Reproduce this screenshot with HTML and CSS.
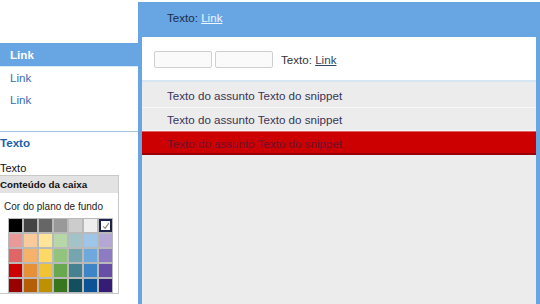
FILE: index.html
```html
<!DOCTYPE html>
<html lang="pt">
<head>
<meta charset="utf-8">
<title>UI</title>
<link rel="stylesheet" href="styles.css">
</head>
<body>
<div class="page">
  <aside class="sidebar">
    <nav class="nav">
      <div class="nav-item selected">Link</div>
      <a class="nav-item" href="#">Link</a>
      <a class="nav-item" href="#">Link</a>
    </nav>
    <section class="section">
      <div class="section-title">Texto</div>
      <div class="section-text">Texto</div>
      <div class="box">
        <div class="box-head">Conteúdo da caixa</div>
        <div class="box-body">
          <div class="box-label">Cor do plano de fundo</div>
          <div class="palette">
            <span class="sw" style="background:#000000"></span>
            <span class="sw" style="background:#444444"></span>
            <span class="sw" style="background:#666666"></span>
            <span class="sw" style="background:#999999"></span>
            <span class="sw" style="background:#cccccc"></span>
            <span class="sw" style="background:#eeeeee"></span>
            <span class="sw sel"><svg viewBox="0 0 10 10" width="8" height="8"><path d="M1.5 5.5 L4 8 L8.5 1.5" fill="none" stroke="#8a8a8a" stroke-width="1.5"/></svg></span>
            <span class="sw" style="background:#ea9999"></span>
            <span class="sw" style="background:#f9cb9c"></span>
            <span class="sw" style="background:#ffe599"></span>
            <span class="sw" style="background:#b6d7a8"></span>
            <span class="sw" style="background:#a2c4c9"></span>
            <span class="sw" style="background:#9fc5e8"></span>
            <span class="sw" style="background:#b4a7d6"></span>
            <span class="sw" style="background:#e06666"></span>
            <span class="sw" style="background:#f6b26b"></span>
            <span class="sw" style="background:#ffd966"></span>
            <span class="sw" style="background:#93c47d"></span>
            <span class="sw" style="background:#76a5af"></span>
            <span class="sw" style="background:#6fa8dc"></span>
            <span class="sw" style="background:#8e7cc3"></span>
            <span class="sw" style="background:#cc0000"></span>
            <span class="sw" style="background:#e69138"></span>
            <span class="sw" style="background:#f1c232"></span>
            <span class="sw" style="background:#6aa84f"></span>
            <span class="sw" style="background:#45818e"></span>
            <span class="sw" style="background:#3d85c6"></span>
            <span class="sw" style="background:#674ea7"></span>
            <span class="sw" style="background:#990000"></span>
            <span class="sw" style="background:#b45f06"></span>
            <span class="sw" style="background:#bf9000"></span>
            <span class="sw" style="background:#38761d"></span>
            <span class="sw" style="background:#134f5c"></span>
            <span class="sw" style="background:#0b5394"></span>
            <span class="sw" style="background:#351c75"></span>
          </div>
        </div>
      </div>
    </section>
  </aside>
  <main class="main">
    <header class="main-head">Texto: <a class="head-link" href="#">Link</a></header>
    <div class="toolbar">
      <input class="field" type="text">
      <input class="field" type="text">
      <span class="tool-text">Texto: <a class="tool-link" href="#">Link</a></span>
    </div>
    <div class="list">
      <div class="row">Texto do assunto Texto do snippet</div>
      <div class="row">Texto do assunto Texto do snippet</div>
      <div class="row row-red">Texto do assunto Texto do snippet</div>
    </div>
  </main>
</div>
</body>
</html>
```

FILE: styles.css
```css
* { box-sizing: border-box; }
html, body { margin: 0; padding: 0; }
body {
  width: 540px;
  height: 304px;
  overflow: hidden;
  background: #ffffff;
  font-family: "Liberation Sans", Arial, sans-serif;
  font-size: 11.6px;
  color: #222;
}
.page {
  display: flex;
  height: 304px;
}
.sidebar {
  width: 138px;
  flex: none;
  padding-top: 43px;
}
.nav {
  display: flex;
  flex-direction: column;
  border-bottom: 1px solid #a9c3de;
  padding-bottom: 20px;
}
.nav-item {
  display: block;
  height: 22px;
  line-height: 22px;
  padding-left: 10px;
  color: #3a6db4;
  text-decoration: none;
}
.nav-item.selected {
  height: 24px;
  line-height: 23px;
  background: #67a6e3;
  color: #ffffff;
  font-weight: bold;
  border-bottom: 1px solid #d8e8f6;
}
.section {
  padding-top: 3px;
}
.section-title {
  color: #1b5eae;
  font-weight: bold;
  line-height: 16px;
  margin-bottom: 10px;
}
.section-text {
  font-size: 11px;
  color: #111;
  line-height: 14px;
  margin-bottom: 0;
}
.box {
  width: 121px;
  margin-left: -2px;
  border: 1px solid #c9c9c9;
  background: #fff;
}
.box-head {
  background: #e3e3e3;
  font-weight: bold;
  font-size: 9.8px;
  color: #111;
  height: 17px;
  line-height: 17px;
  padding-left: 1px;
}
.box-body {
  padding: 8px 0 0 5px;
}
.box-label {
  font-size: 10px;
  color: #222;
  line-height: 12px;
  margin-bottom: 5px;
}
.palette {
  display: grid;
  grid-template-columns: repeat(7, 13px);
  grid-auto-rows: 13px;
  gap: 2px;
  padding: 1px;
  width: 105px;
  margin-left: 4px;
  background: #b9b9b9;
}
.sw {
  display: block;
}
.sw.sel {
  background: #ffffff;
  outline: 2px solid #1f2350;
  outline-offset: -2px;
  display: flex;
  align-items: center;
  justify-content: center;
}
.main {
  flex: 1;
  margin-top: 2px;
  background: #67a6e3;
  display: flex;
  flex-direction: column;
  padding: 0 4px;
}
.main-head {
  height: 35px;
  line-height: 32px;
  padding-left: 25px;
  color: #1c2b45;
}
.head-link {
  color: #eef6ff;
  text-decoration: underline;
}
.toolbar {
  background: #ffffff;
  height: 45px;
  display: flex;
  align-items: center;
  padding-left: 12px;
  gap: 3px;
  border-bottom: 2px solid #d5e5f3;
  padding-top: 2px;
}
.field {
  width: 58px;
  height: 17px;
  border: 1px solid #cfcfcf;
  border-radius: 2px;
  background: #fafafa;
  margin: 0;
  padding: 0;
}
.tool-text {
  margin-left: 5px;
  color: #333;
}
.tool-link {
  color: #2f4560;
  text-decoration: underline;
}
.list {
  flex: 1;
  background: #ececec;
  padding-top: 2px;
}
.row {
  height: 23.5px;
  line-height: 23px;
  padding-left: 25px;
  color: #3a3358;
  border-bottom: 1px solid #f7f7f7;
}
.row-red {
  background: #cc0000;
  color: #6d0f33;
  border-bottom: 2px solid #990000;
  border-top: 1px solid #e06060;
}
```
